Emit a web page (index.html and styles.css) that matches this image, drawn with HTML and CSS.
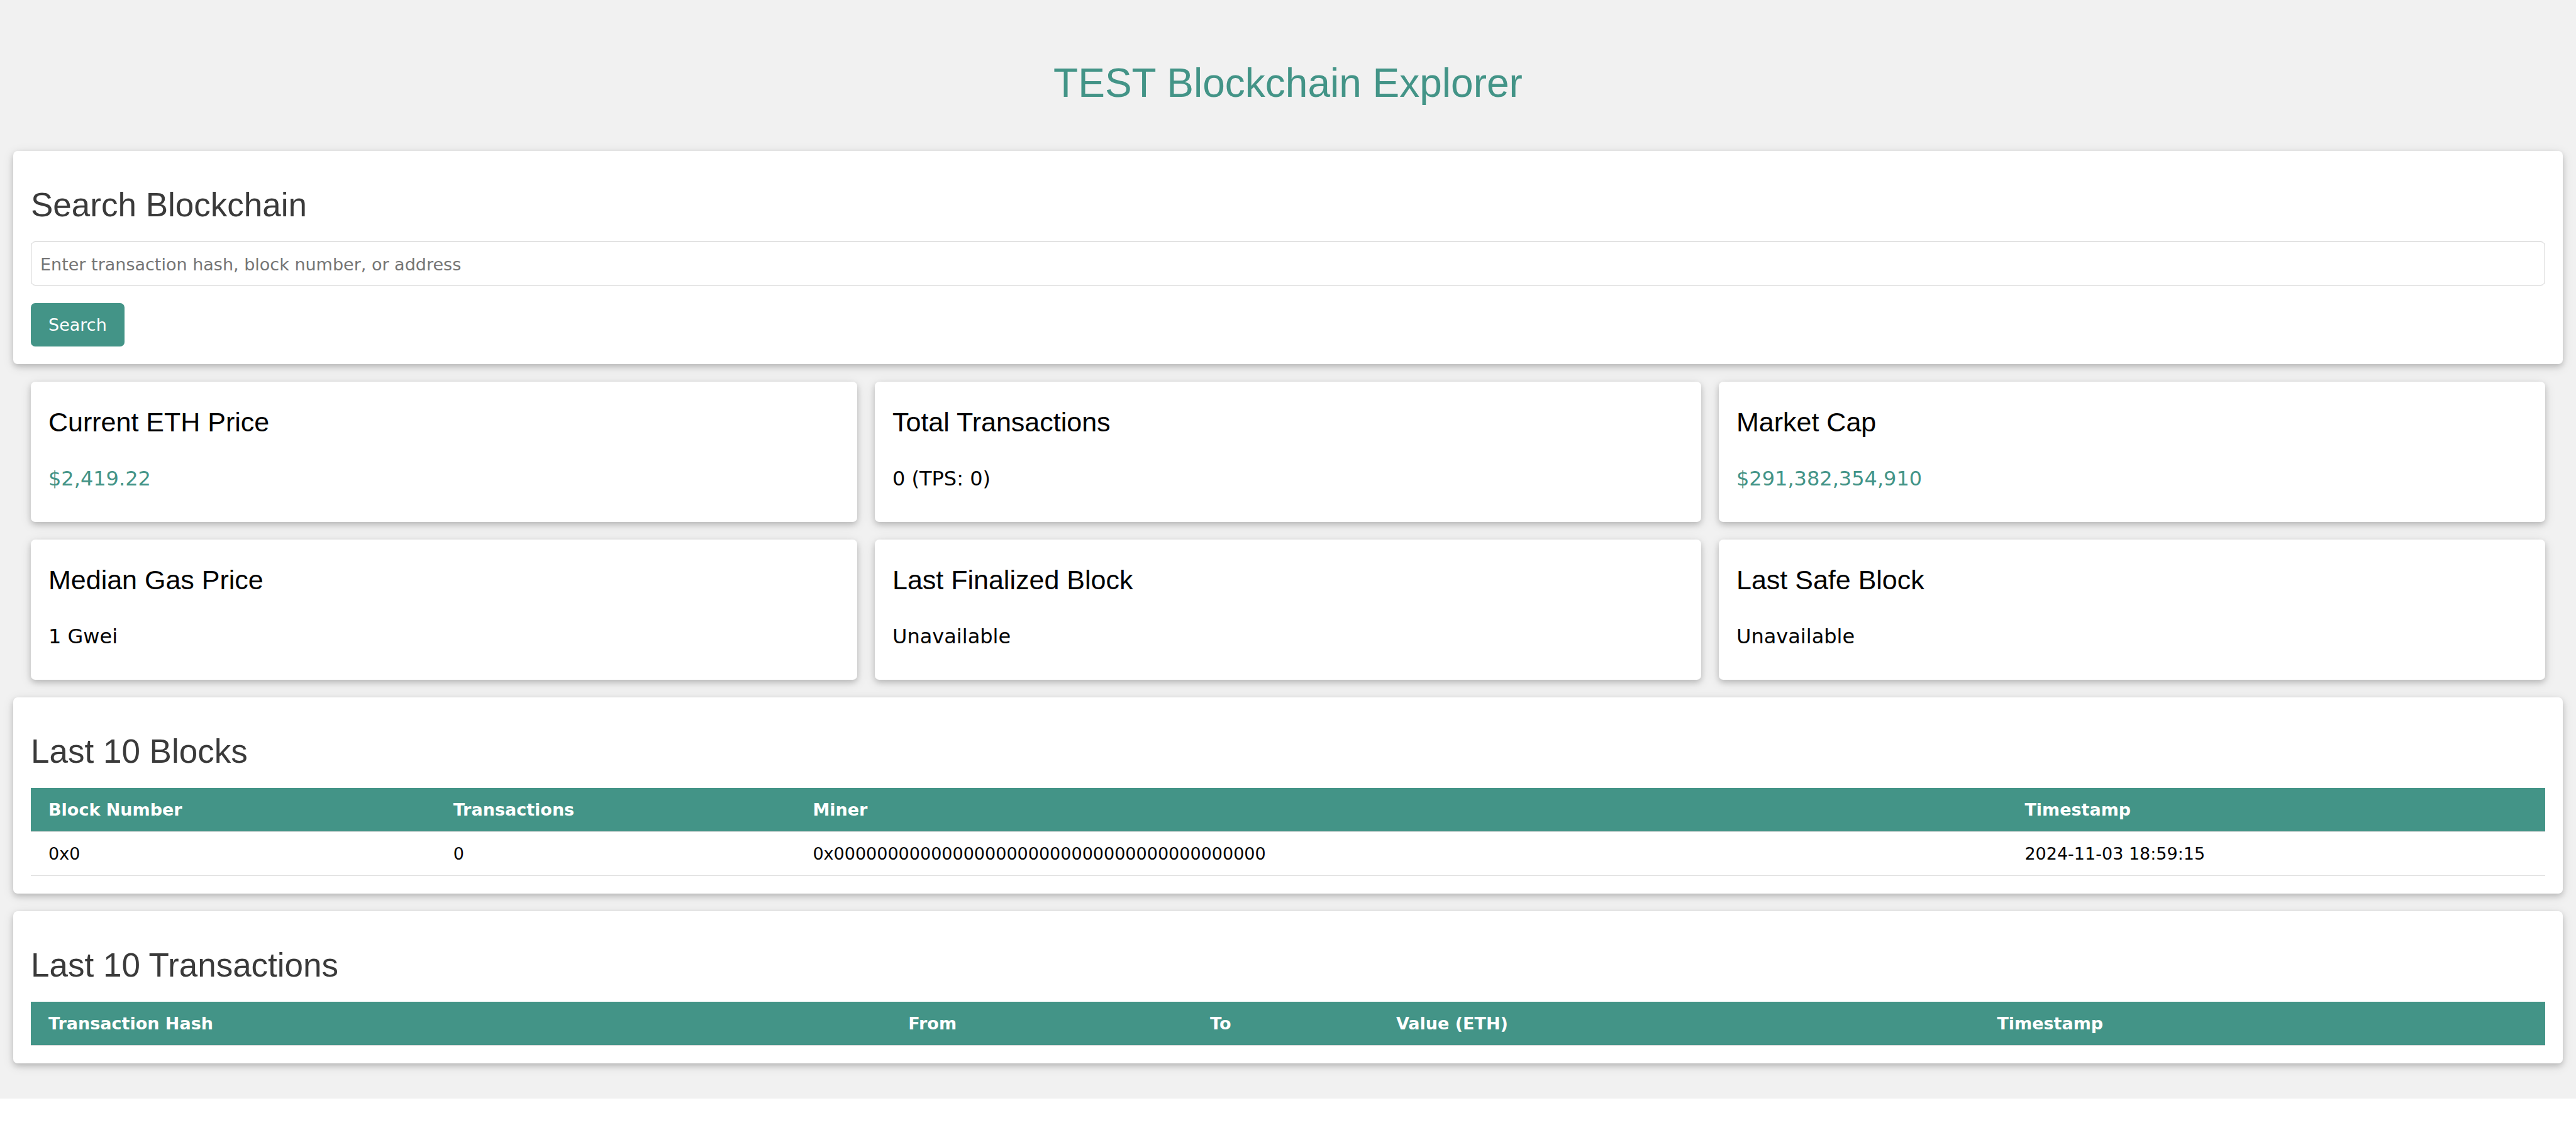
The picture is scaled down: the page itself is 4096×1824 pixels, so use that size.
FILE: index.html
```html
<!DOCTYPE html>
<html lang="en">
<head>
<meta charset="utf-8">
<title>TEST Blockchain Explorer</title>
<link rel="stylesheet" href="styles.css">
</head>
<body>
<div class="page">
  <header class="masthead">
    <h1 class="site-title">TEST Blockchain Explorer</h1>
  </header>
  <main class="content">
    <section class="card panel">
      <h2 class="panel-title"><label for="query">Search Blockchain</label></h2>
      <form class="search">
        <input class="search-input" id="query" type="text" placeholder="Enter transaction hash, block number, or address">
        <button class="search-button" type="button">Search</button>
      </form>
    </section>

    <section class="stats">
      <article class="card stat">
        <h3 class="stat-title">Current ETH Price</h3>
        <p class="stat-value accent">$2,419.22</p>
      </article>
      <article class="card stat">
        <h3 class="stat-title">Total Transactions</h3>
        <p class="stat-value">0 (TPS: 0)</p>
      </article>
      <article class="card stat">
        <h3 class="stat-title">Market Cap</h3>
        <p class="stat-value accent">$291,382,354,910</p>
      </article>
      <article class="card stat">
        <h3 class="stat-title">Median Gas Price</h3>
        <p class="stat-value">1 Gwei</p>
      </article>
      <article class="card stat">
        <h3 class="stat-title">Last Finalized Block</h3>
        <p class="stat-value">Unavailable</p>
      </article>
      <article class="card stat">
        <h3 class="stat-title">Last Safe Block</h3>
        <p class="stat-value">Unavailable</p>
      </article>
    </section>

    <section class="card panel">
      <h2 class="panel-title">Last 10 Blocks</h2>
      <table class="data-table">
        <colgroup>
          <col class="col-number"><col class="col-count"><col class="col-miner"><col class="col-mined-at">
        </colgroup>
        <thead>
          <tr><th>Block Number</th><th>Transactions</th><th>Miner</th><th>Timestamp</th></tr>
        </thead>
        <tbody>
          <tr><td>0x0</td><td>0</td><td>0x0000000000000000000000000000000000000000</td><td>2024-11-03 18:59:15</td></tr>
        </tbody>
      </table>
    </section>

    <section class="card panel">
      <h2 class="panel-title">Last 10 Transactions</h2>
      <table class="data-table">
        <colgroup>
          <col class="col-hash"><col class="col-from"><col class="col-to"><col class="col-value"><col class="col-sent-at">
        </colgroup>
        <thead>
          <tr><th>Transaction Hash</th><th>From</th><th>To</th><th>Value (ETH)</th><th>Timestamp</th></tr>
        </thead>
        <tbody></tbody>
      </table>
    </section>
  </main>
</div>
</body>
</html>
```

FILE: styles.css
```css
*, *::before, *::after {
  box-sizing: border-box;
}

html {
  background: #ffffff;
}

body {
  margin: 0;
  color: #000000;
  font-family: Verdana, "DejaVu Sans", sans-serif;
  font-size: 27px;
  line-height: 40px;
}

.page {
  padding-bottom: 56px;
  background: #f1f1f1;
}

.masthead {
  padding: 84px 28px 60px;
  text-align: center;
}

.site-title,
.panel-title,
.stat-title {
  margin: 0;
  font-family: Arial, "Liberation Sans", sans-serif;
  font-weight: 400;
}

.site-title {
  color: #439487;
  font-size: 64px;
  line-height: 96px;
}

.content {
  display: flex;
  flex-direction: column;
  gap: 28px;
  padding: 0 21px;
}

.card {
  background: #ffffff;
  border-radius: 7px;
  box-shadow: 0 4px 9px 0 rgba(0, 0, 0, 0.16), 0 4px 18px 0 rgba(0, 0, 0, 0.12);
}

.panel {
  padding: 28px;
}

.panel-title {
  margin: 18px 0;
  color: #3a3a3a;
  font-size: 53px;
  line-height: 80px;
}

.search {
  display: flex;
  flex-direction: column;
  align-items: flex-start;
  gap: 28px;
}

.search-input {
  width: 100%;
  height: 70px;
  padding: 15px 14px 13px;
  border: 1px solid #cccccc;
  border-radius: 7px;
  background: #ffffff;
  font: inherit;
}

.search-input::placeholder {
  color: #757575;
}

.search-button {
  padding: 15px 28px 14px;
  border: 0;
  border-radius: 7px;
  background: #439487;
  color: #ffffff;
  font: inherit;
}

.stats {
  display: grid;
  grid-template-columns: repeat(3, 1fr);
  gap: 28px;
  padding: 0 28px;
}

.stat {
  padding: 14px 28px;
}

.stat-title {
  margin: 18px 0 34px;
  font-size: 43px;
  line-height: 64px;
}

.stat-value {
  margin: 0 0 31px;
  font-size: 32px;
  line-height: 48px;
}

.accent {
  color: #439487;
}

.data-table {
  width: 100%;
  table-layout: fixed;
  border-spacing: 0;
}

.data-table th,
.data-table td {
  padding: 15px 28px 14px;
  border-bottom: 1px solid #dddddd;
  text-align: left;
}

.data-table th {
  background: #439487;
  background-clip: padding-box;
  color: #ffffff;
}

.col-number { width: 16.1%; }
.col-count { width: 14.3%; }
.col-miner { width: 48.2%; }
.col-mined-at { width: 21.4%; }

.col-hash { width: 34.2%; }
.col-from { width: 12%; }
.col-to { width: 7.4%; }
.col-value { width: 23.9%; }
.col-sent-at { width: 22.5%; }
```
